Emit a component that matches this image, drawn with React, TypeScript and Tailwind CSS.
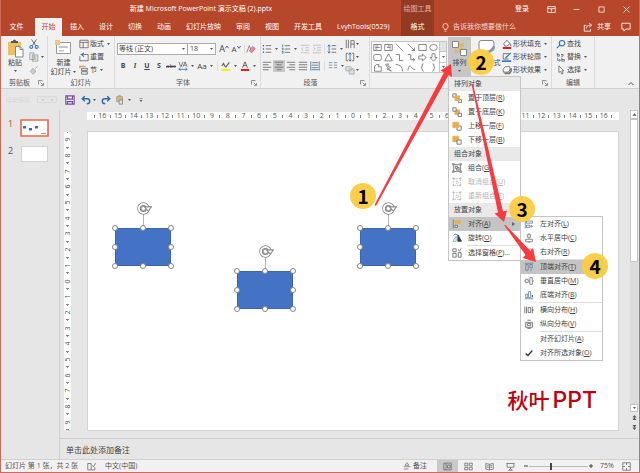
import React from "react";
import type { ReactNode } from "react";

type IconProps = { className?: string; children: ReactNode };

// All small icons share one 12x12 grid
function Icon({ className = "size-[10px]", children }: IconProps) {
    return (
        <svg viewBox="0 0 12 12" fill="none" stroke="#666" className={`shrink-0 ${className}`}>
            {children}
        </svg>
    );
}

function Caret({ className = "w-[7px]" }: { className?: string }) {
    return (
        <span className={`flex shrink-0 items-center justify-center ${className}`}>
            <svg viewBox="0 0 6 4" className="h-[2px] w-[3px]"><path d="M0 0H6L3 4Z" fill="#555" /></svg>
        </span>
    );
}

function Launcher() {
    return (
        <button aria-label="更多选项" className="flex w-[9px] items-center">
            <Icon className="size-[6px]"><path d="M1 9V1H9M5 5L10 10M11 6V11H6" strokeWidth="1.4" /></Icon>
        </button>
    );
}

function Group({ label, className, launcher, children }: { label: string; className: string; launcher?: boolean; children: ReactNode }) {
    return (
        <section aria-label={label} className={`flex shrink-0 flex-col border-r border-[#dcdcdc] ${className}`}>
            <div className="flex h-[42px]">{children}</div>
            <div className="flex h-[10px] text-[#555]">
                <span className="flex-1 text-center">{label}</span>
                {launcher && <Launcher />}
            </div>
        </section>
    );
}

function SmallButton({ icon, text, caret }: { icon: ReactNode; text: string; caret?: boolean }) {
    return (
        <button className="flex h-[13px] items-center gap-px whitespace-nowrap">
            {icon}
            {text}
            {caret && <Caret />}
        </button>
    );
}

function Tool({ label, active, children }: { label: string; active?: boolean; children: ReactNode }) {
    return (
        <button aria-label={label} className={`flex h-[12px] w-[12px] shrink-0 items-center justify-center ${active ? "bg-[#c9c9c9]" : ""}`}>
            {children}
        </button>
    );
}

const tabs = ["插入", "设计", "切换", "动画", "幻灯片放映", "审阅", "视图", "开发工具", "LvyhTools(0529)"];

function Header() {
    return (
        <header className="bg-[#b7472a] text-white">
            <div className="flex h-[18px] items-center">
                <h1 className="w-[400px] text-center">新建 Microsoft PowerPoint 演示文稿 (2).pptx</h1>
                <div className="flex h-full w-[33px] items-center justify-center bg-[#933a22] text-[#e6b3a3]">绘图工具</div>
                <div className="flex flex-1 items-center justify-end gap-[16px] pr-[8px]">
                    <button className="mr-[2px]">登录</button>
                    <button aria-label="功能区显示选项"><Icon className="size-[9px]"><path d="M1 2H11V10H1ZM1 4.500H11M6 9V6M4.500 7L6 5.500L7.500 7" stroke="#fff" /></Icon></button>
                    <button aria-label="最小化"><Icon className="size-[9px]"><path d="M2 6H10" stroke="#fff" /></Icon></button>
                    <button aria-label="最大化"><Icon className="size-[9px]"><path d="M2.500 2.500H9.500V9.500H2.500Z" stroke="#fff" /></Icon></button>
                    <button aria-label="关闭"><Icon className="size-[9px]"><path d="M2 2L10 10M10 2L2 10" stroke="#fff" /></Icon></button>
                </div>
            </div>
            <div className="flex h-[18px] items-stretch">
                <nav className="flex w-[400px] gap-px">
                    <button className="ml-[2px] mr-[4px] w-[27px]">文件</button>
                    <button className="w-[27px] bg-[#f1f1f1] text-[#b7472a]">开始</button>
                    {tabs.map((t) => <button key={t} className="px-[7px] whitespace-nowrap">{t}</button>)}
                </nav>
                <button className="w-[33px] bg-[#933a22]">格式</button>
                <div className="flex flex-1 items-center pr-[8px]">
                    <button className="ml-[7px] flex items-center gap-[3px] text-[#f3d9d1]">
                        <Icon className="size-[9px]"><path d="M4.500 8.500C4.500 7 2.500 6.500 2.500 4.200A3.500 3.500 0 0 1 9.500 4.200C9.500 6.500 7.500 7 7.500 8.500ZM4.800 10.800H7.200" stroke="#fff" /></Icon>
                        告诉我你想要做什么
                    </button>
                    <button className="ml-auto flex items-center gap-[4px]">
                        <Icon className="size-[10px]"><path d="M4 4H1.500V11H9V8.500M4 8C4 5 6 3.800 9 3.800M7.500 1.500L10.500 3.800L7.500 6.200" stroke="#fff" /></Icon>
                        共享
                    </button>
                    <button aria-label="批注" className="ml-[10px]"><Icon className="size-[10px]"><path d="M1 1.500H11V8.500H6L3.500 11V8.500H1Z" stroke="#fff" /></Icon></button>
                </div>
            </div>
        </header>
    );
}

const gold = "#e8b04a";

const menuIcons: Record<string, ReactNode> = {
    front: <><path d="M1 1H5V5H1ZM8 8H11.500V11.500H8Z" fill="#fff" /><path d="M3.500 3.500H9V9H3.500Z" fill={gold} stroke={gold} /></>,
    back: <><path d="M3.500 3.500H9V9H3.500Z" fill={gold} stroke={gold} /><path d="M1 1H5V5H1ZM7.500 7.500H11.500V11.500H7.500Z" fill="#fff" /></>,
    forward: <><path d="M6 6H11V11H6Z" fill="#fff" /><path d="M1 1.500H8V8H1Z" fill={gold} stroke={gold} /></>,
    backward: <><path d="M1 1.500H8V8H1Z" fill={gold} stroke={gold} /><path d="M6 6H11V11H6Z" fill="#fff" /></>,
    group: <path d="M2 2H10V10H2ZM4 4H6.500V6.500H4ZM6.500 5.500H8.500V8.500H5.500V6.500M.5 1H3M1 .5V3M9 1H11.500M11 .5V3M.5 11H3M1 9V11.500M9 11H11.500M11 9V11.500" />,
    ungroup: <path d="M2 2H10V10H2ZM.5 1.500H3.500M1.500 .5V3.500M8.500 1.500H11.500M10.500 .5V3.500M.5 10.500H3.500M1.500 8.500V11.500M8.500 10.500H11.500M10.500 8.500V11.500M5 5H7.500V7.500H5Z" stroke="#b5b5b5" strokeDasharray="2 1" />,
    align: <><path d="M1.500 .5V11.500" stroke="#777" /><path d="M3.500 2H10V5H3.500Z" fill={gold} stroke={gold} /><path d="M3.500 7.500H6.500V10H3.500Z" fill="#fff" /></>,
    rotate: <><path d="M1 10L5 4V10Z" stroke="#8aa" /><path d="M7 2V10H11.500Z" fill="#345" stroke="#345" /><path d="M2 3C3 1 5 1 6 2.500" stroke="#2f75b5" /></>,
    pane: <path d="M1 1H5V4.500H1ZM1 6.500H5V11H1ZM7.500 5.500H11V11H7.500ZM7 1.500L9 3.500L11 .5" />,
    left: <path d="M1.500 1V11M3 2.500H10V5H3ZM3 7.500H7V10H3ZM8 8.700H11M9.300 7.500L8 8.700L9.300 10" stroke="#68809a" />,
    center: <path d="M6 0V2M6 5V7.500M6 10.500V12M4 2H8V5H4ZM2 7.500H10V10.500H2Z" stroke="#777" />,
    right: <path d="M10.500 1V11M2 2.500H9V5H2ZM5 7.500H9V10H5Z" stroke="#68809a" />,
    top: <path d="M1 1.500H11M2 3H5V10H2ZM7 3H10V7H7ZM8.500 11V8.500" stroke="#68809a" />,
    middle: <path d="M0 6H2M5 6H7M10 6H12M2 4H5V8H2ZM7 2H10V10H7Z" stroke="#777" />,
    bottom: <><path d="M1 10.500H11M2 5H4.500V9H2ZM5.500 2H8V9H5.500Z" stroke="#68809a" /><path d="M10 9V6" stroke="#2f75b5" strokeWidth="1.500" /></>,
    horizontal: <path d="M1 2V10M3 2V10M5 3H8V9H5ZM10 2V10M9.500 6H12" stroke="#666" />,
    vertical: <path d="M4 1.500H8M2 4H10M4 5.500H8V8H4ZM2 10H10M4 11.500H8M2 4V10M10 4V10" stroke="#666" />,
    check: <path d="M2 6.500L4.800 9L10 3" stroke="#333" strokeWidth="1.500" />,
};

type Item = { icon?: string; text: string; k: string; tail?: string; off?: boolean; on?: boolean };

function MenuRow({ item, more }: { item: Item; more?: boolean }) {
    return (
        <button className={`flex h-[14px] w-full items-center gap-[6px] pl-[3px] whitespace-nowrap ${item.on ? "bg-[#c4c4c4]" : ""} ${item.off ? "text-[#b5b5b5]" : "text-[#444]"}`}>
            <Icon>{item.icon && menuIcons[item.icon]}</Icon>
            <span>{item.text}(<u>{item.k}</u>){item.tail}</span>
            {more && <svg viewBox="0 0 4 6" className="mr-[5px] ml-auto h-[4px] w-[3px]"><path d="M0 0L4 3L0 6Z" fill="#555" /></svg>}
        </button>
    );
}

function MenuTitle({ children }: { children: ReactNode }) {
    return <div className="flex h-[14px] items-center bg-[#e9e9e9] pl-[5px] text-[#444]">{children}</div>;
}

const Divider = () => <div className="ml-[18px] h-px bg-[#dedede]" />;

const orderItems: Item[] = [
    { icon: "front", text: "置于顶层", k: "R" },
    { icon: "back", text: "置于底层", k: "K" },
    { icon: "forward", text: "上移一层", k: "F" },
    { icon: "backward", text: "下移一层", k: "B" },
];

const groupItems: Item[] = [
    { icon: "group", text: "组合", k: "G" },
    { icon: "ungroup", text: "取消组合", k: "U", off: true },
    { icon: "ungroup", text: "重新组合", k: "E", off: true },
];

const alignItems: Item[][] = [
    [{ icon: "left", text: "左对齐", k: "L" }, { icon: "center", text: "水平居中", k: "C" }, { icon: "right", text: "右对齐", k: "R" }],
    [{ icon: "top", text: "顶端对齐", k: "T", on: true }, { icon: "middle", text: "垂直居中", k: "M" }, { icon: "bottom", text: "底端对齐", k: "B" }],
    [{ icon: "horizontal", text: "横向分布", k: "H" }, { icon: "vertical", text: "纵向分布", k: "V" }],
    [{ text: "对齐幻灯片", k: "A" }, { icon: "check", text: "对齐所选对象", k: "O" }],
];

function ArrangeMenu() {
    return (
        <div className="absolute top-[39px] left-0 w-[73px] border border-[#c6c6c6] bg-white">
            <MenuTitle>排列对象</MenuTitle>
            {orderItems.map((i) => <MenuRow key={i.k} item={i} />)}
            <MenuTitle>组合对象</MenuTitle>
            {groupItems.map((i) => <MenuRow key={i.k} item={i} />)}
            <MenuTitle>放置对象</MenuTitle>
            <div className="relative">
                <MenuRow item={{ icon: "align", text: "对齐", k: "A", on: true }} more />
                <div className="absolute top-[-1px] left-full w-[83px] border border-[#c6c6c6] bg-white">
                    {alignItems.map((items, n) => (
                        <div key={n}>
                            {n > 0 && <Divider />}
                            {items.map((i) => <MenuRow key={i.k} item={i} />)}
                        </div>
                    ))}
                </div>
            </div>
            <MenuRow item={{ icon: "rotate", text: "旋转", k: "O" }} />
            <Divider />
            <MenuRow item={{ icon: "pane", text: "选择窗格", k: "P", tail: "..." }} />
        </div>
    );
}

const shapePaths = [
    "M1 2H11V10H1ZM3 4H7M3 6H9M3 8H6", "M1 2H11V10H1ZM5 4H9M4 6H9M7 8H9", "M1 1L11 11", "M1 1L10 10M10 6V10H6", "M1 2H11V10H1Z", "M1 6A5 4 0 1 0 11 6A5 4 0 1 0 1 6Z",
    "M3 2H9Q11 2 11 4V8Q11 10 9 10H3Q1 10 1 8V4Q1 2 3 2Z", "M6 1L11 10.500H1Z", "M1 2H6V10H11", "M1 2H5V9H10M8 7L10.500 9L8 11", "M1 4H6V1.500L11 6L6 10.500V8H1Z", "M4 1V6H1.500L6 11L10.500 6H8V1Z",
    "M2 11V4L5 2H8L7 5H11V11Z", "M2 2L6 1L5 4L9 6L6 7L10 11L4 8L5 6Z", "M1 2Q10 2 10 11", "M1 10Q3 1 5.500 5T11 9", "M7.500 1Q5 1 5.500 4Q5.500 6 4 6Q5.500 6 5.500 8Q5 11 7.500 11", "M4.500 1Q7 1 6.500 4Q6.500 6 8 6Q6.500 6 6.500 8Q7 11 4.500 11",
];

function Ribbon() {
    return (
        <div className="relative z-20 flex h-[53px] border-b border-[#d2d2d2] bg-[#f1f1f1] text-[#444]">
            <Group label="剪贴板" className="w-[47px]" launcher>
                <button className="flex w-[28px] flex-col items-center pt-[3px]">
                    <svg viewBox="0 0 17 19" className="h-[19px] w-[17px]">
                        <path d="M1 3H14V16H1Z" fill="#eebf61" />
                        <path d="M4 4V2H6A1.500 1.500 0 0 1 9 2H11V4Z" fill="#555" />
                        <path d="M8.500 7.500H13L16 10.500V18H8.500Z" fill="#fff" stroke="#888" />
                        <path d="M13 7.500V10.500H16" fill="none" stroke="#888" />
                    </svg>
                    粘贴
                    <Caret className="h-[6px] w-[7px]" />
                </button>
                <div className="flex flex-col pt-px">
                    <button aria-label="剪切" className="flex h-[13px] items-center"><Icon><path d="M3 .5L8 8M9 .5L4 8" stroke="#555" /><path d="M1 9.500A1.700 1.700 0 1 0 4.500 9.500A1.700 1.700 0 1 0 1 9.500M7.500 9.500A1.700 1.700 0 1 0 11 9.500A1.700 1.700 0 1 0 7.500 9.500" stroke="#2f75b5" strokeWidth="1.300" /></Icon></button>
                    <button aria-label="复制" className="flex h-[13px] items-center"><Icon><path d="M1 1H6V9H1ZM4 3.500H10.500V11H4ZM5.500 6H9M5.500 8.500H9" stroke="#999" fill="#eee" /></Icon><Caret /></button>
                    <button aria-label="格式刷" className="flex h-[13px] items-center"><Icon><path d="M10.500 1L7 5M4.500 4L8.500 7.500M4.500 4L1.500 8L5 11L8.500 7.500" fill="#ccc" stroke="#aaa" /></Icon></button>
                </div>
            </Group>

            <Group label="幻灯片" className="w-[67px]">
                <button className="flex w-[31px] flex-col items-center pt-[3px] leading-[9px]">
                    <svg viewBox="0 0 17 19" className="h-[19px] w-[17px]">
                        <path d="M1.500 3.500H15.500V14.500H1.500Z" fill="#fff" stroke="#999" />
                        <path d="M4 7H13V9H4ZM4 11H9V12.500H4Z" fill="#c5c5c5" />
                        <path d="M0 1H5V6H0Z" fill="#f3c57a" />
                    </svg>
                    新建
                    <span className="flex whitespace-nowrap">幻灯片<Caret className="w-[5px]" /></span>
                </button>
                <div className="flex flex-col items-start pt-px">
                    <SmallButton text="版式" caret icon={<Icon><path d="M1 1.500H11V10.500H1ZM1 4H11M5 4V10.500" /></Icon>} />
                    <SmallButton text="重置" icon={<Icon><path d="M2 3H11V10.500H1V5" /><path d="M6 1L3 3L6 5.500" stroke="#2f75b5" strokeWidth="1.300" /></Icon>} />
                    <SmallButton text="节" caret icon={<Icon><path d="M3 4H10V6.500H3ZM3 8H10V11H3Z" /><path d="M.5 1.500H8M1 1.500V4" stroke="#e08a3c" strokeWidth="1.400" /></Icon>} />
                </div>
            </Group>

            <Group label="字体" className="w-[146px]" launcher>
                <div className="flex flex-col gap-[5px] pt-[7px] pl-[2px]">
                    <div className="flex h-[12px] items-center">
                        <label className="flex h-full w-[71px] items-center border border-[#ababab] bg-white">
                            <select aria-label="字体" className="w-0 flex-1 appearance-none pl-px"><option>等线 (正文)</option></select>
                            <Caret />
                        </label>
                        <label className="flex h-full w-[28px] items-center border border-l-0 border-[#ababab] bg-white">
                            <select aria-label="字号" className="w-0 flex-1 appearance-none pl-[2px]"><option>18</option></select>
                            <Caret />
                        </label>
                        <span className="w-[2px]" />
                        <Tool label="增大字号"><span className="text-[9px]">A</span><Icon className="mb-[4px] size-[4px]"><path d="M1 10L6 3L11 10" stroke="#2f75b5" strokeWidth="3" /></Icon></Tool>
                        <Tool label="减小字号"><span className="text-[8px]">A</span><Icon className="mb-[4px] size-[4px]"><path d="M1 3L6 10L11 3" stroke="#2f75b5" strokeWidth="3" /></Icon></Tool>
                        <span className="ml-[2px] h-[10px] w-px bg-[#ddd]" />
                        <Tool label="清除格式"><Icon><path d="M1 10L4 2L6 7" stroke="#777" /><path d="M4 8L8 3L11 5.500L7 10.500Z" fill="#e58aa4" stroke="#d05f80" /></Icon></Tool>
                    </div>
                    <div className="flex h-[12px] items-center">
                        <Tool label="加粗"><b>B</b></Tool>
                        <Tool label="倾斜"><i className="font-serif font-bold">I</i></Tool>
                        <Tool label="下划线"><u className="font-bold">U</u></Tool>
                        <Tool label="阴影"><b>S</b></Tool>
                        <Tool label="删除线"><s className="text-[6px]">abc</s></Tool>
                        <Tool label="字符间距"><Icon><path d="M1 1L3.500 7L6 1M6 7L8.500 1L11 7M7 5H10" /><path d="M1 10H11M3 8.500L1 10L3 11.500M9 8.500L11 10L9 11.500" stroke="#2f75b5" /></Icon></Tool>
                        <Caret />
                        <Tool label="更改大小写"><span className="text-[8px]">Aa</span></Tool>
                        <Caret />
                        <span className="mx-[2px] h-[10px] w-px bg-[#ddd]" />
                        <Tool label="突出显示"><Icon><path d="M1 9.500H11V12H1Z" fill="#f5ee16" stroke="none" /><path d="M1 6L3 3L5 7M5.500 7.500L10 1.500" stroke="#666" strokeWidth="1.500" /></Icon></Tool>
                        <Caret />
                        <Tool label="字体颜色"><Icon><path d="M1 9.500H11V12H1Z" fill="#e02020" stroke="none" /><path d="M3 8L6 1L9 8M4 5.500H8" strokeWidth="1.200" /></Icon></Tool>
                        <Caret />
                    </div>
                </div>
            </Group>

            <Group label="段落" className="w-[109px]" launcher>
                <div className="flex flex-col gap-[5px] pt-[7px]">
                    <div className="flex h-[12px] items-center">
                        <Tool label="项目符号"><Icon><path d="M4.500 2H11M4.500 6H11M4.500 10H11" /><path d="M1 2H2.500M1 6H2.500M1 10H2.500" stroke="#2f75b5" strokeWidth="1.800" /></Icon></Tool>
                        <Caret />
                        <Tool label="编号"><Icon><path d="M4.500 2H11M4.500 6H11M4.500 10H11" /><path d="M2 .5V3.500M1 5H2.500V7H1M1 9H2.500V11H1" stroke="#2f75b5" /></Icon></Tool>
                        <Caret />
                        <Tool label="减少缩进"><Icon><path d="M1 1.500H11M6 4.500H11M6 7.500H11M1 10.500H11M4 4L1.500 6L4 8" stroke="#bbb" /></Icon></Tool>
                        <Tool label="增加缩进"><Icon><path d="M1 1.500H11M6 4.500H11M6 7.500H11M1 10.500H11M1.500 4L4 6L1.500 8" stroke="#bbb" /></Icon></Tool>
                        <span className="mx-px h-[10px] w-px bg-[#ddd]" />
                        <Tool label="行距"><Icon><path d="M5.500 2H11M5.500 6H11M5.500 10H11" /><path d="M2.500 1V11M1 3L2.500 1L4 3M1 9L2.500 11L4 9" stroke="#2f75b5" /></Icon></Tool>
                        <Caret className="w-[6px]" />
                    </div>
                    <div className="flex h-[12px] items-center">
                        <Tool label="左对齐"><Icon><path d="M1 1.500H11M1 4.500H8M1 7.500H11M1 10.500H8" /></Icon></Tool>
                        <Tool label="居中" active><Icon><path d="M1 1.500H11M3 4.500H9M1 7.500H11M3 10.500H9" /></Icon></Tool>
                        <Tool label="右对齐"><Icon><path d="M1 1.500H11M4 4.500H11M1 7.500H11M4 10.500H11" /></Icon></Tool>
                        <Tool label="两端对齐"><Icon><path d="M1 1.500H11M1 4.500H11M1 7.500H11M1 10.500H11" /></Icon></Tool>
                        <Tool label="分散对齐"><Icon><path d="M2.500 2H9.500M2.500 5H9.500M2.500 8H9.500" /><path d="M1 .5V11.500M11 .5V11.500M2 10.500H10" stroke="#2f75b5" /></Icon></Tool>
                        <span className="mr-[2px] ml-[3px] h-[10px] w-px bg-[#ddd]" />
                        <Tool label="分栏"><Icon><path d="M1 2H5M1 5H5M1 8H5M7 2H11M7 5H11M7 8H11" stroke="#6d87a5" /></Icon></Tool>
                        <Caret className="w-[6px]" />
                    </div>
                </div>
                <div className="flex flex-col pt-px">
                    <button aria-label="文字方向" className="flex h-[13px] items-center"><Icon><path d="M1.500 1V11M4 1V11M7 11V2M11 11V2M7 6H11M7 2H11" /></Icon><Caret className="w-[5px]" /></button>
                    <button aria-label="对齐文本" className="flex h-[13px] items-center"><Icon><path d="M4 1.500H1.500V10.500H4M8 1.500H10.500V10.500H8" /><path d="M6 1V11M4.500 3L6 1L7.500 3M4.500 9L6 11L7.500 9" stroke="#2f75b5" /></Icon><Caret className="w-[5px]" /></button>
                    <button aria-label="转换为 SmartArt" className="flex h-[13px] items-center"><Icon><path d="M1 2H7L9 4.500L7 7H1ZM5 5H11V11H5Z" fill="#ddd" stroke="#aaa" /></Icon><Caret className="w-[5px]" /></button>
                </div>
            </Group>

            <Group label="绘图" className="w-[182px]" launcher>
                <div className="mt-[5px] ml-px grid h-[32px] w-[69px] grid-cols-6 place-items-center border border-[#c6c6c6] bg-white">
                    {shapePaths.map((d) => <Icon key={d} className="size-[9px]"><path d={d} /></Icon>)}
                </div>
                <div className="mt-[5px] flex h-[32px] w-[7px] flex-col divide-y divide-[#c6c6c6] border border-l-0 border-[#c6c6c6]">
                    <button aria-label="上一行" className="flex-1 bg-[#e3e3e3]" />
                    <button aria-label="下一行" className="flex flex-1 items-center justify-center bg-white"><Caret className="w-[5px]" /></button>
                    <button aria-label="其他" className="flex flex-1 items-center justify-center bg-white"><Caret className="w-[5px]" /></button>
                </div>
                <div className="relative mt-px ml-px">
                    <button className="flex h-[39px] w-[23px] flex-col items-center bg-[#c6c6c6] pt-[2px]">
                        <svg viewBox="0 0 17 19" className="h-[19px] w-[17px]">
                            <path d="M4 5H9V10H4ZM8 9H13V14H8Z" fill="#ecb658" />
                            <path d="M9 4H13V8H9ZM4 11H7V14H4Z" fill="#ecb658" />
                            <path d="M1.500 2.500H7.500V8.500H1.500ZM9.500 10.500H15.500V16.500H9.500Z" fill="#fff" stroke="#888" />
                        </svg>
                        排列
                        <Caret className="h-[6px] w-[7px]" />
                    </button>
                    <ArrangeMenu />
                </div>
                <button className="flex w-[31px] flex-col items-center pt-[3px]">
                    <svg viewBox="0 0 17 19" className="h-[19px] w-[17px]">
                        <path d="M3 1.500H14Q16 1.500 16 4V10Q16 12 14 12H9L4 17V12H3Q1 12 1 10V4Q1 1.500 3 1.500Z" fill="#fff" stroke="#888" />
                        <path d="M16 6L9 14L7 17L11 15L17 9Z" fill="#8899aa" />
                    </svg>
                    <span className="whitespace-nowrap">快速样式</span>
                    <Caret className="h-[6px] w-[7px]" />
                </button>
                <div className="flex flex-col items-start pt-px">
                    <SmallButton text="形状填充" caret icon={<Icon><path d="M1 9.500H11V12H1Z" fill="#e02020" stroke="none" /><path d="M2 5.500L6 1.500L9.500 5.500L6 8.500H3.500ZM10.500 6V8.500" fill="#fff" stroke="#556" /></Icon>} />
                    <SmallButton text="形状轮廓" caret icon={<Icon><path d="M9 2H1.500V8.500H8" /><path d="M4 7.500L10.500 1" stroke="#2f75b5" strokeWidth="1.400" /><path d="M0 10H11V12H0Z" fill="#4472c4" stroke="none" /></Icon>} />
                    <SmallButton text="形状效果" caret icon={<Icon><path d="M3 10H9L11 7V4" stroke="#777" strokeWidth="2" /><path d="M1.500 5L4 2H9.500V6L7.500 8.500H1.500Z" fill="#fff" /></Icon>} />
                </div>
            </Group>

            <Group label="编辑" className="w-[43px]">
                <div className="flex flex-col items-start pt-px pl-[4px]">
                    <SmallButton text="查找" icon={<Icon><path d="M4 5A3 3 0 1 0 10.500 5A3 3 0 1 0 4 5M5 7L1 11" stroke="#2f75b5" strokeWidth="1.300" /></Icon>} />
                    <SmallButton text="替换" caret icon={<Icon><path d="M1.500 1V5H4V3H1.500M6 3H8.500V5H6M7 7V11H10V9H7" /><path d="M2 7V10H5M4 8.500L5.500 10L4 11.500" stroke="#2f75b5" /></Icon>} />
                    <SmallButton text="选择" caret icon={<Icon><path d="M3.500 1V9L5.500 7.500L7 11L8.500 10L7 7H9.500Z" fill="#fff" /></Icon>} />
                </div>
            </Group>
            <button aria-label="折叠功能区" className="mr-[5px] mb-[1px] ml-auto self-end"><Icon className="size-[6px]"><path d="M1 8L6 3L11 8" stroke="#444" strokeWidth="2" /></Icon></button>
        </div>
    );
}

function QuickAccess() {
    return (
        <div className="flex h-[21px] items-center bg-[#e6e6e6] pl-[5px]">
            <span className="w-[31px] text-[6px] whitespace-nowrap text-[#d6d6d6]">自动保存</span>
            <span className="flex h-[7px] w-[20px] items-center justify-around rounded-[1px] border border-[#dadada]"><i className="size-[2px] bg-[#d2d2d2]" /><i className="size-[2px] bg-[#d2d2d2]" /></span>
            <button aria-label="保存" className="ml-[8px]"><Icon><path d="M1 1H11V11H1ZM3 1V5H9V1M3 11V8H9V11" stroke="#7d4fa3" strokeWidth="1.400" /></Icon></button>
            <button aria-label="撤消" className="ml-[6px] flex items-center"><Icon><path d="M1.500 4.500H7.500Q10.500 4.500 10.500 7.500T7 10.500M4.500 1.500L1.500 4.500L4.500 7.500" stroke="#2b6cab" strokeWidth="1.700" /></Icon><Caret /></button>
            <button aria-label="恢复" className="ml-[3px]"><Icon><path d="M10.500 4.500H4.500Q1.500 4.500 1.500 7.500T5 10.500M7.500 1.500L10.500 4.500L7.500 7.500" stroke="#2b6cab" strokeWidth="1.700" /></Icon></button>
            <button aria-label="粘贴" className="ml-[4px] flex items-center"><Icon><path d="M2 2H9V8H2Z" fill="#c9b98e" stroke="#aaa07c" /><path d="M4 1H7M5 6H9V11H5Z" fill="#ddd" stroke="#888" /></Icon><Caret className="w-[9px]" /></button>
            <button aria-label="自定义快速访问工具栏" className="ml-[4px]"><Icon className="size-[6px]"><path d="M3 3H9" stroke="#555" /><path d="M3 6H9L6 10Z" fill="#555" stroke="none" /></Icon></button>
        </div>
    );
}

function Thumbnails() {
    return (
        <aside className="flex w-[59px] shrink-0 flex-col gap-[9px] border-r border-[#cfcfcf] pt-[9px] pl-[7px] text-[9px] leading-[9px] text-[#555]">
            <button className="flex items-start gap-[7px]">
                <span className="w-[5px] text-[#c8482b]">1</span>
                <svg viewBox="0 0 29 18" className="h-[18px] w-[29px]">
                    <path d="M1 1H28V17H1Z" fill="#fff" stroke="#e8694c" strokeWidth="1.600" />
                    <path d="M3 7H6V9.500H3ZM9 9H12V11.500H9ZM15 7H18V9.500H15Z" fill="#3c6cc0" />
                    <path d="M21 14.500H26" stroke="#e08080" />
                </svg>
            </button>
            <button className="flex items-start gap-[8px]">
                <span className="w-[5px]">2</span>
                <span className="h-[16px] w-[27px] border border-[#d2d2d2] bg-white" />
            </button>
        </aside>
    );
}

const across = Array.from({ length: 33 }, (_, i) => Math.abs(i - 16));
const down = Array.from({ length: 19 }, (_, i) => Math.abs(i - 9));

const handles = ["top-0 left-0", "top-0 left-1/2", "top-0 left-full", "top-1/2 left-0", "top-1/2 left-full", "top-full left-0", "top-full left-1/2", "top-full left-full"];

// Selected rectangle with its eight grips and the rotation handle
function Shape({ className }: { className: string }) {
    return (
        <div className={`absolute h-[38px] w-[56px] bg-[#4472c4] outline -outline-offset-1 outline-[#3d66b0] ${className}`}>
            <span className="absolute bottom-full left-1/2 h-[14px] w-px bg-[#b5b5b5]" />
            <svg viewBox="0 0 14 12" fill="none" className="absolute top-[-26px] left-[22px] h-[13px] w-[15px]">
                <circle cx="6" cy="6" r="4" stroke="#858585" strokeWidth="3.600" />
                <circle cx="6" cy="6" r="4.200" stroke="#fff" strokeWidth="1.800" />
                <circle cx="6" cy="6" r="2" fill="#fff" stroke="#8c8c8c" strokeWidth=".8" />
                <path d="M7 4.500H13.500L10.500 8.500Z" fill="#fff" stroke="#8c8c8c" />
            </svg>
            {handles.map((h) => (
                <span key={h} className={`absolute size-[6px] -translate-x-1/2 -translate-y-1/2 rounded-full border border-[#858585] bg-white ${h}`} />
            ))}
        </div>
    );
}

function Workspace() {
    return (
        <div className="flex min-h-[328px] flex-1">
            <div className="mt-[22px] mb-[8px] ml-[4px] flex w-[7px] flex-col bg-white text-[#555]">
                {down.map((n, i) => (
                    <span key={i} className="flex flex-1 flex-col items-center justify-between">
                        <i className="h-px w-px bg-[#888]" />
                        <span className="flex h-[7px] -rotate-90 items-center text-[7px]">{n}</span>
                        <i className="h-px w-[3px] bg-[#888]" />
                    </span>
                ))}
            </div>
            <div className="ml-[16px] flex flex-1 flex-col pt-[2px] pb-[7px]">
                <div className="flex h-[8px] bg-white px-[7px] text-[#555]">
                    {across.map((n, i) => (
                        <span key={i} className="flex w-0 flex-1 items-center">
                            <i className="h-[3px] w-px bg-[#888]" />
                            <span className="flex w-0 flex-1 justify-center leading-[8px]">{n}</span>
                        </span>
                    ))}
                    <i className="h-[3px] w-px self-center bg-[#888]" />
                </div>
                <main className="relative mt-[11px] flex-1 border border-[#d4d4d4] bg-white">
                    <Shape className="top-[96px] left-[27px]" />
                    <Shape className="top-[139px] left-[149px]" />
                    <Shape className="top-[96px] left-[272px]" />
                    <div className="absolute right-[21px] bottom-[18px] flex items-baseline gap-[3px] leading-[24px] text-[#c00010]">
                        <span className="font-['Noto_Sans_CJK_SC'] text-[21px] font-medium">秋叶</span>
                        <span className="font-['Inter'] text-[23px] font-medium">PPT</span>
                    </div>
                </main>
            </div>
            <div className="mr-px ml-[11px] flex w-[8px] flex-col text-[#555]">
                <button aria-label="向上滚动" className="flex h-[9px] items-center justify-center border border-[#c6c6c6] bg-white"><Icon className="size-[5px]"><path d="M1 9H11L6 3Z" fill="#555" stroke="none" /></Icon></button>
                <div className="flex-1 bg-[#dcdcdc]"><div className="h-1/2 border border-[#c6c6c6] bg-white" /></div>
                <button aria-label="向下滚动" className="flex h-[8px] items-center justify-center border border-[#c6c6c6] bg-white"><Caret className="w-[5px]" /></button>
                <button aria-label="上一张" className="flex h-[10px] items-center justify-center"><Icon className="size-[5px]"><path d="M1 6L6 0L11 6ZM1 12L6 6L11 12Z" fill="#555" stroke="none" /></Icon></button>
                <button aria-label="下一张" className="mb-[6px] flex h-[10px] items-center justify-center"><Icon className="size-[5px]"><path d="M1 0H11L6 6ZM1 6H11L6 12Z" fill="#555" stroke="none" /></Icon></button>
            </div>
        </div>
    );
}

function StatusBar() {
    return (
        <footer className="flex h-[13px] items-center border-t border-[#d0d0d0] bg-[#f1f1f1] pl-[4px] text-[#555]">
            <span>幻灯片 第 1 张，共 2 张</span>
            <button aria-label="拼写检查" className="ml-[9px]"><Icon className="size-[9px]"><path d="M5.500 2H1V10.500H10.500V7M5.500 2V10.500M7 4.500L8.500 6.500L11.500 1.500" /></Icon></button>
            <span className="ml-[9px]">中文(中国)</span>
            <button className="mr-[10px] ml-auto flex items-center gap-[2px]"><Icon className="size-[8px]"><path d="M1 7H11M1 10.500H8M6 1L3 5H9Z" /></Icon>备注</button>
            <button aria-label="普通视图" className="flex h-full w-[21px] items-center justify-center bg-[#c9c9c9]"><Icon className="size-[9px]"><path d="M1 1.500H11V10.500H1ZM4 1.500V10.500M6 4H9.500V8H6Z" /></Icon></button>
            <button aria-label="幻灯片浏览" className="flex w-[21px] justify-center"><Icon className="size-[9px]"><path d="M1 1.500H5V5H1ZM7 1.500H11V5H7ZM1 7H5V10.500H1ZM7 7H11V10.500H7Z" /></Icon></button>
            <button aria-label="阅读视图" className="flex w-[21px] justify-center"><Icon className="size-[9px]"><path d="M6 3L1 2V9.500L6 10.500L11 9.500V2ZM6 3V10.500M2.500 5H5M2.500 7H5M7 5H9.500M7 7H9.500" /></Icon></button>
            <button aria-label="幻灯片放映" className="flex w-[21px] justify-center"><Icon className="size-[9px]"><path d="M.5 2H11.500M1.500 2V7H10.500V2M6 7V9M3.500 11H8.500L6 9Z" /></Icon></button>
            <button aria-label="缩小" className="ml-[2px]"><Icon className="size-[6px]"><path d="M2 6H10" stroke="#444" strokeWidth="2" /></Icon></button>
            <input
                type="range"
                aria-label="缩放"
                defaultValue={36}
                className="h-px w-[59px] appearance-none bg-[#bbb] [&::-webkit-slider-thumb]:h-[7px] [&::-webkit-slider-thumb]:w-[2px] [&::-webkit-slider-thumb]:appearance-none [&::-webkit-slider-thumb]:bg-[#444]"
            />
            <button aria-label="放大"><Icon className="size-[6px]"><path d="M2 6H10M6 2V10" stroke="#444" strokeWidth="2" /></Icon></button>
            <span className="ml-[6px] w-[14px]">75%</span>
            <button aria-label="适应窗口" className="mr-[8px] ml-[8px]"><Icon className="size-[9px]"><path d="M1 1H11V11H1ZM6 1V4M6 8V11M1 6H4M8 6H11" /></Icon></button>
        </footer>
    );
}

const steps = [
    { n: 1, at: "top-[183px] left-[349px]" },
    { n: 2, at: "top-[49px] left-[467px]" },
    { n: 3, at: "top-[196px] left-[508px]" },
    { n: 4, at: "top-[253px] left-[581px]" },
];

// Numbered tutorial marks drawn over the window
function Annotations() {
    return (
        <div className="pointer-events-none absolute top-0 left-0 z-40">
            <svg viewBox="0 0 640 473" fill="#f93b40" className="h-[473px] w-[640px] max-w-none">
                <path d="M373.500 205L443 72.500L439.500 70.500L450 64L451 77L447.500 75L375 206Z" />
                <path d="M470.500 84L497 212.500L493.500 213.500L503 222L506 210.500L502 211.500L472 84Z" />
                <path d="M503 225L524.500 255L521.500 258L535 262L532 248.500L529.500 251L504.500 225Z" />
            </svg>
            {steps.map((s) => (
                <span key={s.n} className={`absolute flex size-[26px] items-center justify-center rounded-full bg-[#fccb3f]/95 font-['Noto_Sans_CJK_SC'] text-[19px] font-bold text-black ${s.at}`}>{s.n}</span>
            ))}
        </div>
    );
}

export default function App() {
    return (
        <div className="relative flex min-h-screen flex-col overflow-hidden border-x border-b border-[#cf6a58] bg-[#e6e6e6] font-['Open_Sans','Noto_Sans_CJK_SC',sans-serif] text-[7px] leading-[10px]">
            <Header />
            <Ribbon />
            <QuickAccess />
            <div className="flex flex-1">
                <Thumbnails />
                <div className="flex flex-1 flex-col">
                    <Workspace />
                    <input aria-label="备注" placeholder="单击此处添加备注" className="h-[21px] border-t border-[#cfcfcf] bg-[#e6e6e6] pl-[6px] text-[8px] placeholder:text-[#444]" />
                </div>
            </div>
            <StatusBar />
            <Annotations />
        </div>
    );
}
